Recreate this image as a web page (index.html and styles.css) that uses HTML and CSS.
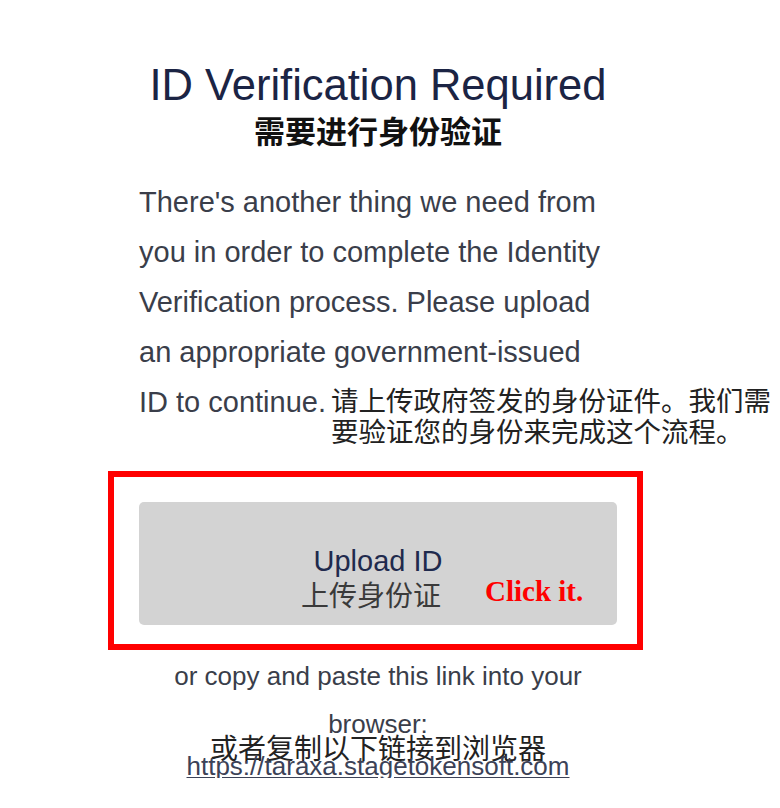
FILE: index.html
```html
<!DOCTYPE html>
<html lang="en">

<head>
    <meta charset="UTF-8">
    <meta name="viewport" content="width=device-width, initial-scale=1.0">
    <title>ID Verification Required</title>
    <link rel="stylesheet" href="styles.css">
</head>

<body>
    <div class="page">
        <h1 class="title">ID Verification Required</h1>
        <h2 class="subtitle">需要进行身份验证</h2>

        <p class="intro">
            There's another thing we need from you in order to complete the Identity
            Verification process. Please upload an appropriate government-issued
            <span class="keep">ID to continue.<span class="intro-cn">请上传政府签发的身份证件。我们需<br>要验证您的身份来完成这个流程。</span></span>
        </p>

        <!-- upload button, marked with a red frame -->
        <div class="frame">
            <a class="upload-btn" href="#">
                <span class="upload-en">Upload ID</span>
                <span class="upload-cn">上传身份证</span>
                <span class="note">Click it.</span>
            </a>
        </div>

        <p class="copy-en">or copy and paste this link into your browser:</p>
        <p class="copy-cn">或者复制以下链接到浏览器</p>
        <p class="copy-link"><a href="#">https://taraxa.stagetokensoft.com</a></p>
    </div>
</body>

</html>
```

FILE: styles.css
```css
body {
    margin: 0;
    background: #fff;
    font-family: "Liberation Sans", "Noto Sans CJK SC", sans-serif;
}

.page {
    width: 478px;
    margin-left: 139px;
    padding-top: 60px;
}

.title {
    margin: 0;
    font-size: 43.5px;
    line-height: 50px;
    font-weight: normal;
    text-align: center;
    color: #1b2444;
}

.subtitle {
    margin: 3px 0 0;
    font-size: 31px;
    line-height: 40px;
    font-weight: bold;
    text-align: center;
    color: #111;
}

.intro {
    margin: 24px 0 0;
    font-size: 29px;
    line-height: 50px;
    color: #3a3e4a;
}

.keep {
    white-space: nowrap;
}

/* chinese part keeps its own narrow lines next to the english text */
.intro-cn {
    display: inline-block;
    vertical-align: top;
    margin: 8.5px 0 0 5px;
    white-space: normal;
    font-size: 27.5px;
    line-height: 31px;
    color: #222;
}

.frame {
    margin: 23px -26px 0 -31px;
    padding: 25px 20px 19px 25px;
    border: 6px solid #f00;
}

.upload-btn {
    position: relative;
    display: block;
    height: 123px;
    box-sizing: border-box;
    padding-top: 44px;
    border-radius: 5px;
    background: #d3d3d3;
    text-align: center;
    text-decoration: none;
}

.upload-en {
    display: block;
    font-size: 29px;
    line-height: 30px;
    color: #1f2a4d;
}

.upload-cn {
    display: block;
    margin: 4px 0 0 -14px;
    font-size: 28px;
    line-height: 34px;
    color: #3a3a3a;
}

.note {
    position: absolute;
    left: 346px;
    top: 75px;
    font-family: "Liberation Serif", serif;
    font-size: 29px;
    font-weight: bold;
    line-height: 1;
    color: #f00;
}

.copy-en {
    margin: 2px 0 0;
    font-size: 26px;
    line-height: 48px;
    text-align: center;
    color: #3a3e4a;
}

.copy-cn {
    margin: -9px 0 0;
    font-size: 28px;
    line-height: 22px;
    text-align: center;
    color: #222;
}

.copy-link {
    margin: -7px 0 0;
    font-size: 26px;
    line-height: 24px;
    text-align: center;
}

.copy-link a {
    color: #3c4257;
}
```
